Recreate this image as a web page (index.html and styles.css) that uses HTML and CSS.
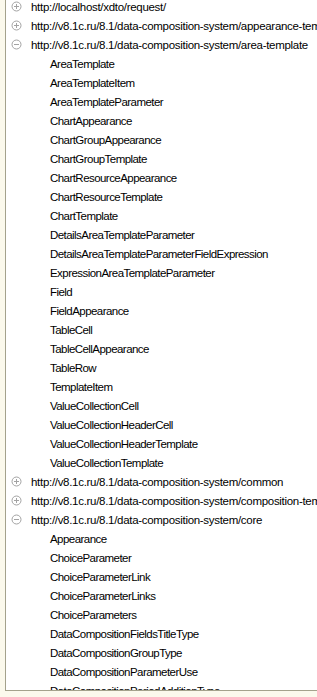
FILE: index.html
```html
<!DOCTYPE html>
<html>
<head>
<meta charset="utf-8">
<link rel="stylesheet" href="styles.css">
</head>
<body>
<div class="panel">
  <ul class="tree">
    <li class="row top"><svg class="exp" viewBox="0 0 11 11"><circle cx="5.5" cy="5.5" r="4.5"/><path d="M3 5.5h5M5.5 3v5"/></svg><span class="url">http://localhost/xdto/request/</span></li>
    <li class="row top"><svg class="exp" viewBox="0 0 11 11"><circle cx="5.5" cy="5.5" r="4.5"/><path d="M3 5.5h5M5.5 3v5"/></svg><span class="url">http://v8.1c.ru/8.1/data-composition-system/appearance-template</span></li>
    <li class="row top"><svg class="exp" viewBox="0 0 11 11"><circle cx="5.5" cy="5.5" r="4.5"/><path d="M3 5.5h5"/></svg><span class="url">http://v8.1c.ru/8.1/data-composition-system/area-template</span></li>
    <li class="row child">AreaTemplate</li>
    <li class="row child">AreaTemplateItem</li>
    <li class="row child">AreaTemplateParameter</li>
    <li class="row child">ChartAppearance</li>
    <li class="row child">ChartGroupAppearance</li>
    <li class="row child">ChartGroupTemplate</li>
    <li class="row child">ChartResourceAppearance</li>
    <li class="row child">ChartResourceTemplate</li>
    <li class="row child">ChartTemplate</li>
    <li class="row child">DetailsAreaTemplateParameter</li>
    <li class="row child">DetailsAreaTemplateParameterFieldExpression</li>
    <li class="row child">ExpressionAreaTemplateParameter</li>
    <li class="row child">Field</li>
    <li class="row child">FieldAppearance</li>
    <li class="row child">TableCell</li>
    <li class="row child">TableCellAppearance</li>
    <li class="row child">TableRow</li>
    <li class="row child">TemplateItem</li>
    <li class="row child">ValueCollectionCell</li>
    <li class="row child">ValueCollectionHeaderCell</li>
    <li class="row child">ValueCollectionHeaderTemplate</li>
    <li class="row child">ValueCollectionTemplate</li>
    <li class="row top"><svg class="exp" viewBox="0 0 11 11"><circle cx="5.5" cy="5.5" r="4.5"/><path d="M3 5.5h5M5.5 3v5"/></svg><span class="url">http://v8.1c.ru/8.1/data-composition-system/common</span></li>
    <li class="row top"><svg class="exp" viewBox="0 0 11 11"><circle cx="5.5" cy="5.5" r="4.5"/><path d="M3 5.5h5M5.5 3v5"/></svg><span class="url">http://v8.1c.ru/8.1/data-composition-system/composition-template</span></li>
    <li class="row top"><svg class="exp" viewBox="0 0 11 11"><circle cx="5.5" cy="5.5" r="4.5"/><path d="M3 5.5h5"/></svg><span class="url">http://v8.1c.ru/8.1/data-composition-system/core</span></li>
    <li class="row child">Appearance</li>
    <li class="row child">ChoiceParameter</li>
    <li class="row child">ChoiceParameterLink</li>
    <li class="row child">ChoiceParameterLinks</li>
    <li class="row child">ChoiceParameters</li>
    <li class="row child">DataCompositionFieldsTitleType</li>
    <li class="row child">DataCompositionGroupType</li>
    <li class="row child">DataCompositionParameterUse</li>
    <li class="row child">DataCompositionPeriodAdditionType</li>
    <li class="row child">DataCompositionSortDirection</li>
  </ul>
</div>
</body>
</html>
```
FILE: styles.css
```css
html, body {
  margin: 0;
  padding: 0;
  overflow: hidden;
  background: #fbf9ec;
}
.panel {
  margin-left: 5px;
  width: 400px;
  height: 690px;
  background: #ffffff;
  border-left: 1px solid #a4a28c;
  border-bottom: 1px solid #a4a28c;
  overflow: hidden;
}
.tree {
  list-style: none;
  margin: -3px 0 0 0;
  padding: 0;
  font-family: "Liberation Sans", Arial, sans-serif;
  font-size: 11.5px;
  letter-spacing: -0.55px;
  color: #000000;
}
.row {
  height: 19px;
  display: flex;
  align-items: center;
  white-space: nowrap;
}
.top {
  padding-left: 5px;
}
.child {
  padding-left: 44px;
}
.url {
  letter-spacing: -0.3px;
}
.exp {
  width: 11px;
  height: 11px;
  flex: none;
  margin-right: 9px;
  fill: none;
  stroke: #a3a3a3;
  stroke-width: 1;
}
```
